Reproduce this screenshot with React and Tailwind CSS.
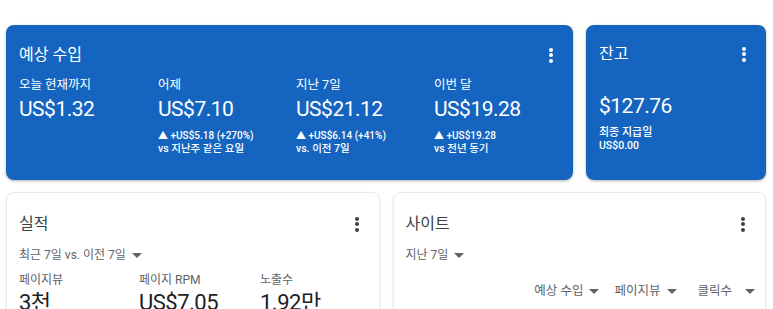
import { useState } from 'react';

const font = { fontFamily: 'Roboto, "Noto Sans CJK KR", sans-serif' };

function Kebab({ light }) {
  const dot = light ? 'bg-white' : 'bg-[#3c4043]';
  return (
    <div className="flex flex-col items-center gap-[1.5px] w-[24px] py-[2px]">
      <span className={`w-[4px] h-[4px] rounded-full ${dot}`}></span>
      <span className={`w-[4px] h-[4px] rounded-full ${dot}`}></span>
      <span className={`w-[4px] h-[4px] rounded-full ${dot}`}></span>
    </div>
  );
}

function Caret({ className = '' }) {
  return (
    <svg width="10" height="5" viewBox="0 0 10 5" className={className}>
      <path d="M0 0h10L5 5z" fill="#5f6368" />
    </svg>
  );
}

const earnings = [
  { label: '오늘 현재까지', value: 'US$1.32' },
  { label: '어제', value: 'US$7.10', delta: '▲ +US$5.18 (+270%)', vs: 'vs 지난주 같은 요일' },
  { label: '지난 7일', value: 'US$21.12', delta: '▲ +US$6.14 (+41%)', vs: 'vs. 이전 7일' },
  { label: '이번 달', value: 'US$19.28', delta: '▲ +US$19.28', vs: 'vs 전년 동기' },
];

const perf = [
  { label: '페이지뷰', value: '3천' },
  { label: '페이지 RPM', value: 'US$7.05' },
  { label: '노출수', value: '1.92만' },
];

export default function App() {
  const [range] = useState('최근 7일 vs. 이전 7일');

  return (
    <div className="w-[773px] h-[309px] overflow-hidden bg-white pt-[25px] pl-[6px] pr-[7px]" style={font}>
      <div className="grid grid-cols-[1fr_180px] gap-[13px]">
        {/* 예상 수입 */}
        <section className="h-[155px] rounded-[8px] bg-[#1565c0] shadow-[0_1px_3px_rgba(0,0,0,0.3)] pl-[13px] pr-[10px] pt-[18px] text-white">
          <div className="flex items-center justify-between h-[24px]">
            <h3 className="text-[16px] leading-[24px]">예상 수입</h3>
            <Kebab light />
          </div>
          <div className="grid grid-cols-[139px_138px_138px_1fr] mt-[9px]">
            {earnings.map((e) => (
              <div key={e.label}>
                <div className="text-[12.5px] leading-[18px]">{e.label}</div>
                <div className="text-[21px] leading-[28px] mt-[1px] tracking-[-0.5px]">{e.value}</div>
                {e.delta && (
                  <>
                    <div className="text-[10px] leading-[13px] font-medium mt-[6px]">{e.delta}</div>
                    <div className="text-[10.5px] leading-[13px] font-medium">{e.vs}</div>
                  </>
                )}
              </div>
            ))}
          </div>
        </section>

        {/* 잔고 */}
        <section className="h-[155px] rounded-[8px] bg-[#1565c0] shadow-[0_1px_3px_rgba(0,0,0,0.3)] pl-[13px] pr-[10px] pt-[17px] text-white">
          <div className="flex items-center justify-between h-[24px]">
            <h3 className="text-[16px] leading-[24px]">잔고</h3>
            <Kebab light />
          </div>
          <div className="text-[21px] leading-[28px] mt-[26px] tracking-[-0.5px]">$127.76</div>
          <div className="text-[11px] leading-[13px] font-medium mt-[6px]">최종 지급일</div>
          <div className="text-[10.5px] leading-[13px] font-medium">US$0.00</div>
        </section>
      </div>

      <div className="grid grid-cols-2 gap-[13px] mt-[12px]">
        {/* 실적 */}
        <section className="h-[140px] rounded-[8px] bg-white border border-[#e8eaed] shadow-[0_1px_2px_rgba(60,64,67,0.15)] pl-[12px] pr-[10px] pt-[19px]">
          <div className="flex items-center justify-between h-[24px]">
            <h3 className="text-[16px] leading-[24px] text-[#3c4043]">실적</h3>
            <Kebab />
          </div>
          <div className="flex items-center gap-[6px] mt-[10px] h-[18px] text-[12px] text-[#5f6368]">
            <span>{range}</span>
            <Caret />
          </div>
          <div className="grid grid-cols-[120px_121px_1fr] mt-[8px]">
            {perf.map((p) => (
              <div key={p.label}>
                <div className="text-[12px] leading-[16px] text-[#5f6368]">{p.label}</div>
                <div className="text-[22px] leading-[26px] mt-[2px] text-[#202124] tracking-[-0.5px]">{p.value}</div>
              </div>
            ))}
          </div>
        </section>

        {/* 사이트 */}
        <section className="h-[140px] rounded-[8px] bg-white border border-[#e8eaed] shadow-[0_1px_2px_rgba(60,64,67,0.15)] pl-[12px] pr-[10px] pt-[19px]">
          <div className="flex items-center justify-between h-[24px]">
            <h3 className="text-[16px] leading-[24px] text-[#3c4043]">사이트</h3>
            <Kebab />
          </div>
          <div className="flex items-center gap-[6px] mt-[10px] h-[18px] text-[12px] text-[#5f6368]">
            <span>지난 7일</span>
            <Caret />
          </div>
          <div className="flex justify-end items-center mt-[18px] h-[18px] text-[12.5px] text-[#5f6368]">
            <span>예상 수입</span>
            <Caret className="ml-[6px]" />
            <span className="ml-[15px]">페이지뷰</span>
            <Caret className="ml-[7px]" />
            <span className="ml-[20px]">클릭수</span>
            <Caret className="ml-[13px]" />
          </div>
        </section>
      </div>
    </div>
  );
}
